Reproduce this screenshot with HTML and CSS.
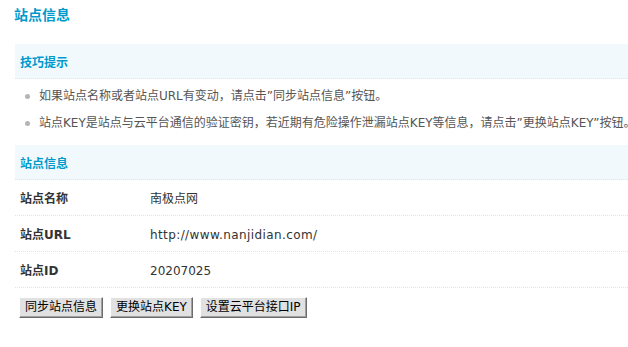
FILE: index.html
```html
<!DOCTYPE html>
<html lang="zh-CN">
<head>
<meta charset="utf-8">
<title>站点信息</title>
<link rel="stylesheet" href="styles.css">
</head>
<body>
<div class="page">
  <h3 class="title">站点信息</h3>
  <div class="panel">
    <div class="section-head">技巧提示</div>
    <ul class="tips">
      <li>如果站点名称或者站点URL有变动，请点击”同步站点信息”按钮。</li>
      <li>站点KEY是站点与云平台通信的验证密钥，若近期有危险操作泄漏站点KEY等信息，请点击”更换站点KEY”按钮。</li>
    </ul>
    <div class="section-head">站点信息</div>
    <div class="row"><div class="label">站点名称</div><div class="value">南极点网</div></div>
    <div class="row"><div class="label">站点URL</div><div class="value url">http://www.nanjidian.com/</div></div>
    <div class="row"><div class="label">站点ID</div><div class="value">20207025</div></div>
    <div class="actions">
      <button class="btn" type="button">同步站点信息</button>
      <button class="btn" type="button">更换站点KEY</button>
      <button class="btn" type="button">设置云平台接口IP</button>
    </div>
  </div>
</div>
</body>
</html>
```
FILE: styles.css
```css
html, body {
  margin: 0;
  padding: 0;
  overflow: hidden;
  background: #fff;
}
body {
  font-family: "DejaVu Sans", "Noto Sans CJK SC", sans-serif;
  font-size: 12px;
  color: #333;
}
.page {
  padding: 6px 0 0 14px;
  width: 760px;
}
.title {
  margin: 0;
  font-size: 14px;
  line-height: 18px;
  font-weight: bold;
  color: #0099cc;
}
.panel {
  margin: 20px 0 0 1px;
}
.section-head {
  height: 30px;
  padding: 4px 0 0 5px;
  line-height: 30px;
  background: #f2f9fd;
  border-bottom: 1px dotted #d6e6f2;
  color: #0099cc;
  font-weight: bold;
}
.tips {
  margin: 4px 0 8px 0;
  padding: 0 0 0 24px;
  list-style: none;
  color: #555;
}
.tips li {
  position: relative;
  line-height: 27px;
  white-space: nowrap;
}
.tips li::before {
  content: "";
  position: absolute;
  left: -14px;
  top: 11px;
  width: 5px;
  height: 5px;
  border-radius: 50%;
  background: #b5b5b5;
}
.row {
  display: flex;
  height: 32px;
  padding-top: 3px;
  line-height: 32px;
  border-bottom: 1px dotted #d6e6f2;
}
.label {
  width: 130px;
  padding-left: 5px;
  font-weight: bold;
}
.value {
  color: #333;
}
.url {
  letter-spacing: 0.4px;
}
.actions {
  display: flex;
  gap: 7px;
  margin-top: 9px;
  padding-left: 4px;
}
.btn {
  height: 21px;
  padding: 0 5px;
  margin: 0;
  font-family: "DejaVu Sans", "Noto Sans CJK SC", sans-serif;
  font-size: 12px;
  line-height: 17px;
  color: #000;
  background: #e1e1e1;
  border: 1px solid;
  border-color: #fff #6b6b6b #6b6b6b #fff;
  box-shadow: inset -1px -1px 0 #a0a0a0;
  border-radius: 0;
}
```
